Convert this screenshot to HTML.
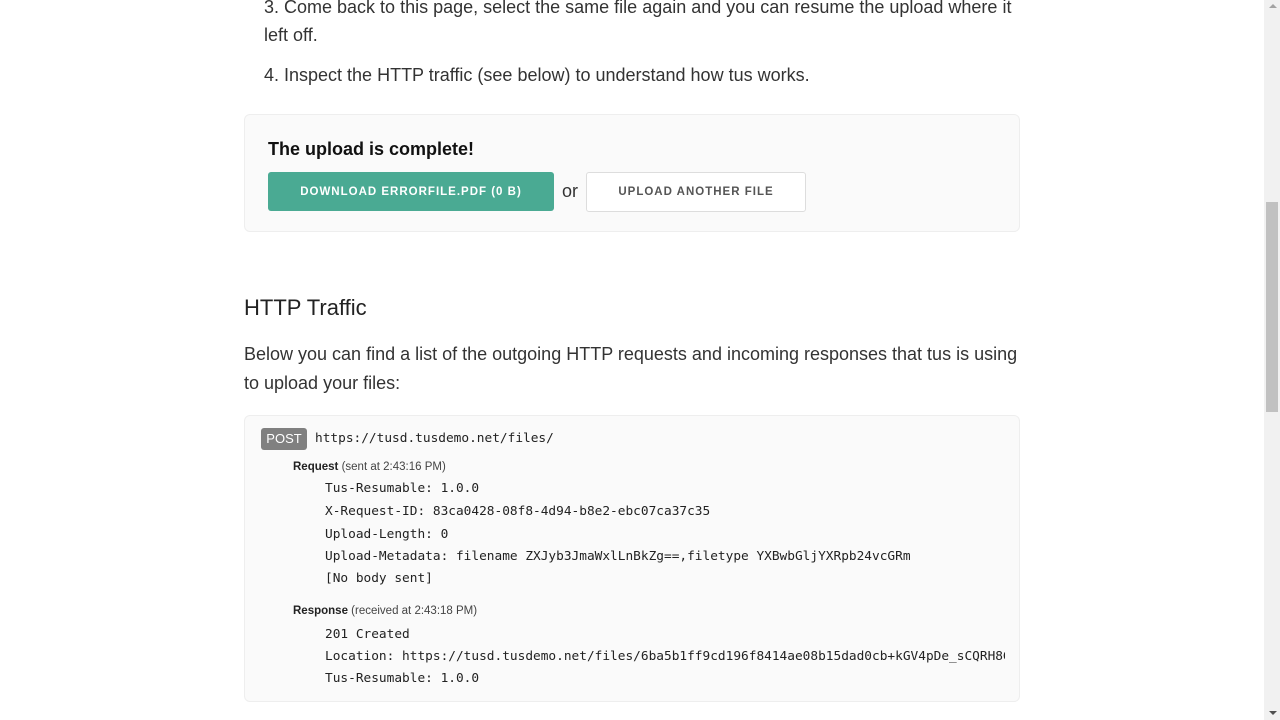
<!DOCTYPE html>
<html><head><meta charset="utf-8"><style>
body{margin:0;width:1280px;height:720px;overflow:hidden;background:#fff;font-family:"Liberation Sans",sans-serif;color:#222;position:relative}
.t{position:absolute;white-space:nowrap}
.p{font-size:18px;color:#333}
.box{position:absolute;left:244px;width:774px;background:#fafafa;border:1px solid #eee;border-radius:6px}
.mono{font-family:"DejaVu Sans Mono","Liberation Mono",monospace;font-size:12.8px;color:#222}
.sb{position:absolute;left:1264px;top:0;width:16px;height:720px;background:#f1f1f1}
</style></head><body>
<div class="t p" style="left:264px;top:-3px">3. Come back to this page, select the same file again and you can resume the upload where it</div>
<div class="t p" style="left:264px;top:25px">left off.</div>
<div class="t p" style="left:264px;top:65px">4. Inspect the HTTP traffic (see below) to understand how tus works.</div>

<div class="box" style="top:114px;height:116px"></div>
<div class="t" style="left:268px;top:139px;font-size:18px;font-weight:bold;color:#111">The upload is complete!</div>
<div style="position:absolute;left:268px;top:172px;width:286px;height:39px;background:#4aaa93;border-radius:3px;color:#fff;font-size:11.5px;font-weight:bold;letter-spacing:1px;text-align:center;line-height:40px">DOWNLOAD ERRORFILE.PDF (0 B)</div>
<div class="t" style="left:562px;top:181px;font-size:18px;color:#333">or</div>
<div style="position:absolute;left:586px;top:172px;width:218px;height:38px;background:#fff;border:1px solid #ddd;border-radius:3px;color:#555;font-size:11.5px;font-weight:bold;letter-spacing:1px;text-align:center;line-height:39px">UPLOAD ANOTHER FILE</div>

<div class="t" style="left:244px;top:295px;font-size:22px;color:#222">HTTP Traffic</div>
<div class="t p" style="left:244px;top:344px">Below you can find a list of the outgoing HTTP requests and incoming responses that tus is using</div>
<div class="t p" style="left:244px;top:373px">to upload your files:</div>

<div class="box" style="top:415px;height:285px;overflow:hidden">
<div style="position:absolute;left:16px;top:12px;width:46px;height:22px;background:#808080;border-radius:3px;color:#fff;font-size:13px;text-align:center;line-height:22px">POST</div>
<div class="t mono" style="left:70px;top:15px">https://tusd.tusdemo.net/files/</div>
<div class="t" style="left:48px;top:45px;font-size:11.5px"><b>Request</b> <span style="color:#444">(sent at 2:43:16 PM)</span></div>
<div class="t mono" style="left:80px;top:65px">Tus-Resumable: 1.0.0</div>
<div class="t mono" style="left:80px;top:88px">X-Request-ID: 83ca0428-08f8-4d94-b8e2-ebc07ca37c35</div>
<div class="t mono" style="left:80px;top:111px">Upload-Length: 0</div>
<div class="t mono" style="left:80px;top:133px">Upload-Metadata: filename ZXJyb3JmaWxlLnBkZg==,filetype YXBwbGljYXRpb24vcGRm</div>
<div class="t mono" style="left:80px;top:155px">[No body sent]</div>
<div class="t" style="left:48px;top:189px;font-size:11.5px"><b>Response</b> <span style="color:#444">(received at 2:43:18 PM)</span></div>
<div class="t mono" style="left:80px;top:211px">201 Created</div>
<div class="t mono" style="left:80px;top:233px;width:680px;overflow:hidden">Location: https://tusd.tusdemo.net/files/6ba5b1ff9cd196f8414ae08b15dad0cb+kGV4pDe_sCQRH8Gx</div>
<div class="t mono" style="left:80px;top:255px">Tus-Resumable: 1.0.0</div>
</div>

<div class="sb">
<div style="position:absolute;left:5px;top:4px;width:0;height:0;border-left:4px solid transparent;border-right:4px solid transparent;border-bottom:4px solid #a3a3a3"></div>
<div style="position:absolute;left:2px;top:202px;width:12px;height:210px;background:#c1c1c1"></div>
<div style="position:absolute;left:5px;top:711px;width:0;height:0;border-left:4px solid transparent;border-right:4px solid transparent;border-top:4px solid #505050"></div>
</div>
</body></html>
